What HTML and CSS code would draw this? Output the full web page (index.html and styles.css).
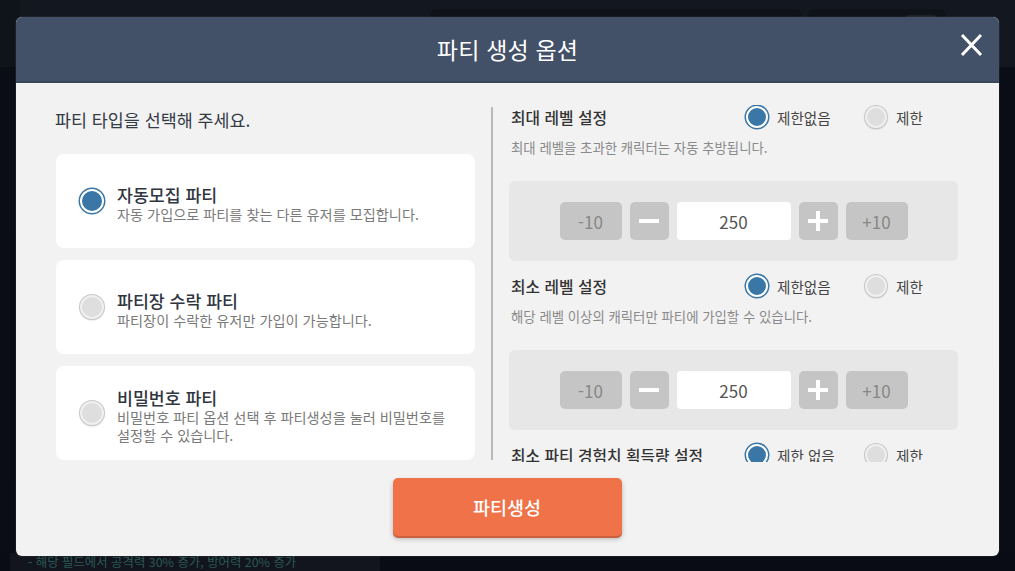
FILE: index.html
```html
<!DOCTYPE html>
<html lang="ko">
<head>
<meta charset="utf-8">
<title>파티 생성 옵션</title>
<link rel="stylesheet" href="styles.css">
</head>
<body>
<div class="scene">
  <div class="bg-top">
    <div class="bg-tab"></div>
    <div class="bg-bar"></div>
    <div class="bg-bar2"><span class="bg-btn"></span></div>
  </div>
  <div class="bg-note">- 해당 필드에서 공격력 30% 증가, 방어력 20% 증가</div>

  <div class="modal">
    <header class="modal-head">
      <h1 class="modal-title">파티 생성 옵션</h1>
      <button class="close" aria-label="닫기">
        <svg width="23" height="24" viewBox="0 0 23 24"><path d="M2 2 L21 22 M21 2 L2 22" stroke="#fff" stroke-width="3" stroke-linecap="butt" fill="none"/></svg>
      </button>
    </header>
    <div class="modal-body">
      <div class="content">
        <section class="types">
          <p class="types-title">파티 타입을 선택해 주세요.</p>
          <div class="type-list">
            <div class="type-card">
              <span class="radio on"></span>
              <div class="type-text">
                <div class="type-name">자동모집 파티</div>
                <div class="type-desc">자동 가입으로 파티를 찾는 다른 유저를 모집합니다.</div>
              </div>
            </div>
            <div class="type-card">
              <span class="radio"></span>
              <div class="type-text">
                <div class="type-name">파티장 수락 파티</div>
                <div class="type-desc">파티장이 수락한 유저만 가입이 가능합니다.</div>
              </div>
            </div>
            <div class="type-card">
              <span class="radio"></span>
              <div class="type-text">
                <div class="type-name">비밀번호 파티</div>
                <div class="type-desc">비밀번호 파티 옵션 선택 후 파티생성을 눌러 비밀번호를 설정할 수 있습니다.</div>
              </div>
            </div>
          </div>
        </section>
        <div class="divider"></div>
        <section class="settings">
          <div class="setting">
            <div class="setting-head">
              <span class="setting-title">최대 레벨 설정</span>
              <label class="opt opt-first"><span class="radio sm on"></span><span class="opt-label">제한없음</span></label>
              <label class="opt"><span class="radio sm"></span><span class="opt-label">제한</span></label>
            </div>
            <p class="setting-desc">최대 레벨을 초과한 캐릭터는 자동 추방됩니다.</p>
            <div class="stepper">
              <span class="step-btn">-10</span>
              <span class="step-icon"><svg width="20" height="20" viewBox="0 0 20 20"><rect x="0" y="8" width="20" height="4" fill="#fff"/></svg></span>
              <span class="step-value">250</span>
              <span class="step-icon"><svg width="20" height="20" viewBox="0 0 20 20"><rect x="0" y="8" width="20" height="4" fill="#fff"/><rect x="8" y="0" width="4" height="20" fill="#fff"/></svg></span>
              <span class="step-btn">+10</span>
            </div>
          </div>
          <div class="setting">
            <div class="setting-head">
              <span class="setting-title">최소 레벨 설정</span>
              <label class="opt opt-first"><span class="radio sm on"></span><span class="opt-label">제한없음</span></label>
              <label class="opt"><span class="radio sm"></span><span class="opt-label">제한</span></label>
            </div>
            <p class="setting-desc">해당 레벨 이상의 캐릭터만 파티에 가입할 수 있습니다.</p>
            <div class="stepper">
              <span class="step-btn">-10</span>
              <span class="step-icon"><svg width="20" height="20" viewBox="0 0 20 20"><rect x="0" y="8" width="20" height="4" fill="#fff"/></svg></span>
              <span class="step-value">250</span>
              <span class="step-icon"><svg width="20" height="20" viewBox="0 0 20 20"><rect x="0" y="8" width="20" height="4" fill="#fff"/><rect x="8" y="0" width="4" height="20" fill="#fff"/></svg></span>
              <span class="step-btn">+10</span>
            </div>
          </div>
          <div class="setting">
            <div class="setting-head">
              <span class="setting-title">최소 파티 경험치 획득량 설정</span>
              <label class="opt opt-first"><span class="radio sm on"></span><span class="opt-label">제한 없음</span></label>
              <label class="opt"><span class="radio sm"></span><span class="opt-label">제한</span></label>
            </div>
          </div>
        </section>
      </div>
      <div class="footer">
        <button class="create">파티생성</button>
      </div>
    </div>
  </div>
</div>
</body>
</html>
```

FILE: styles.css
```css
* { box-sizing: border-box; }

html, body {
  margin: 0;
  padding: 0;
}

body {
  width: 1015px;
  height: 571px;
  overflow: hidden;
  background: #0a0d15;
  font-family: "Noto Sans CJK KR", "Noto Sans", sans-serif;
}

.scene {
  position: relative;
  width: 1015px;
  height: 571px;
  background: linear-gradient(180deg, #0b0e16 0%, #090c14 100%);
}

.bg-top {
  position: relative;
  height: 67px;
  background: #131820;
}

.bg-tab {
  position: absolute;
  left: 0;
  top: 0;
  width: 20px;
  height: 67px;
  background: #0f131a;
}

.bg-bar {
  position: absolute;
  left: 430px;
  top: 9px;
  width: 372px;
  height: 40px;
  border-radius: 6px;
  background: #0f1218;
}

.bg-bar2 {
  position: absolute;
  left: 808px;
  top: 9px;
  width: 138px;
  height: 40px;
  border-radius: 6px;
  background: #0f1218;
}

.bg-btn {
  position: absolute;
  left: 96px;
  top: 6px;
  width: 34px;
  height: 30px;
  border-radius: 5px;
  background: #1c2029;
}

.bg-note {
  position: absolute;
  left: 10px;
  top: 553px;
  width: 370px;
  height: 18px;
  padding-left: 18px;
  background: #12151d;
  color: #2b5856;
  font-size: 12.4px;
  line-height: 18px;
  white-space: nowrap;
}

.modal {
  position: absolute;
  left: 16px;
  top: 17px;
  width: 983px;
  height: 539px;
  border-radius: 6px;
  overflow: hidden;
  background: #f2f2f2;
  display: flex;
  flex-direction: column;
  box-shadow: 0 0 0 1px rgba(255,255,255,0.05);
}

.modal-head {
  position: relative;
  height: 66px;
  flex: 0 0 66px;
  background: #425068;
  border-bottom: 2px solid #3b475b;
}

.modal-title {
  margin: 0;
  text-align: center;
  color: #ffffff;
  font-size: 23px;
  font-weight: 400;
  line-height: 65px;
  letter-spacing: 0.2px;
}

.close {
  position: absolute;
  right: 16px;
  top: 16px;
  width: 23px;
  height: 24px;
  padding: 0;
  border: 0;
  background: transparent;
  display: block;
}

.close svg { display: block; }

.modal-body {
  flex: 1;
  display: flex;
  flex-direction: column;
  padding: 22px 41px 20px 40px;
}

.content {
  display: flex;
  height: 357px;
}

.types {
  width: 419px;
  flex: 0 0 419px;
}

.types-title {
  margin: 2px 0 0 -1px;
  font-size: 17.4px;
  line-height: 26px;
  color: #333b45;
}

.type-list {
  margin-top: 21px;
  display: flex;
  flex-direction: column;
  gap: 12px;
}

.type-card {
  height: 94px;
  background: #ffffff;
  border-radius: 8px;
  display: flex;
  align-items: center;
  padding: 0 16px 0 24px;
}

.radio {
  flex: 0 0 auto;
  display: block;
  width: 24px;
  height: 24px;
  border-radius: 50%;
  background: #dedede;
  border: 2px solid #f0f0f0;
  box-shadow: 0 0 0 1px #c8c8c8, 0 1px 2px rgba(0,0,0,0.25);
}

.radio.on {
  background: #3a77a6;
  border: 2.5px solid #ffffff;
  box-shadow: 0 0 0 1.5px #3a77a6;
}

.radio.sm {
  width: 22px;
  height: 22px;
}

.type-text {
  margin-left: 13px;
  padding-top: 5px;
}

.type-name {
  font-size: 17.3px;
  line-height: 22px;
  font-weight: 500;
  color: #2f3640;
}

.type-desc {
  font-size: 14.2px;
  line-height: 17.5px;
  color: #7a7a7a;
  word-break: keep-all;
}

.divider {
  width: 2px;
  flex: 0 0 2px;
  margin: 2px 16px;
  background: #b9b9b9;
}

.settings {
  width: 449px;
  flex: 0 0 449px;
  overflow: hidden;
}

.setting + .setting {
  margin-top: 13px;
}

.setting-head {
  height: 24px;
  display: flex;
  align-items: center;
}

.setting-title {
  width: 237px;
  flex: 0 0 237px;
  padding-left: 2px;
  font-size: 15.8px;
  font-weight: 500;
  color: #333;
  white-space: nowrap;
}

.opt {
  display: flex;
  align-items: center;
}

.opt-first {
  width: 119px;
  flex: 0 0 119px;
}

.opt-label {
  margin-left: 9px;
  font-size: 14.6px;
  color: #444;
  white-space: nowrap;
}

.setting-desc {
  margin: 9px 0 0;
  padding-left: 2px;
  font-size: 13.4px;
  line-height: 18px;
  color: #8a8a8a;
}

.stepper {
  margin-top: 25px;
  height: 80px;
  background: #e7e7e7;
  border-radius: 6px;
  display: flex;
  align-items: center;
  justify-content: center;
  gap: 8px;
}

.step-btn {
  width: 62px;
  height: 38px;
  border-radius: 5px;
  background: #c5c5c5;
  color: #878787;
  font-size: 17px;
  display: flex;
  align-items: center;
  justify-content: center;
}

.step-icon {
  width: 39px;
  height: 38px;
  border-radius: 5px;
  background: #c5c5c5;
  display: flex;
  align-items: center;
  justify-content: center;
}

.step-icon svg { display: block; }

.step-value {
  width: 114px;
  height: 38px;
  border-radius: 4px;
  background: #ffffff;
  color: #555;
  font-size: 17px;
  display: flex;
  align-items: center;
  justify-content: center;
}

.footer {
  margin-top: 16px;
  display: flex;
  justify-content: center;
}

.create {
  width: 229px;
  height: 58px;
  border: 0;
  border-radius: 5px;
  background: #ef7249;
  color: #ffffff;
  font-family: "Noto Sans CJK KR", "Noto Sans", sans-serif;
  font-size: 18.5px;
  font-weight: 500;
  box-shadow: 0 2px 0 #c9603f, 0 3px 5px rgba(0,0,0,0.25);
  padding: 0;
}
```
